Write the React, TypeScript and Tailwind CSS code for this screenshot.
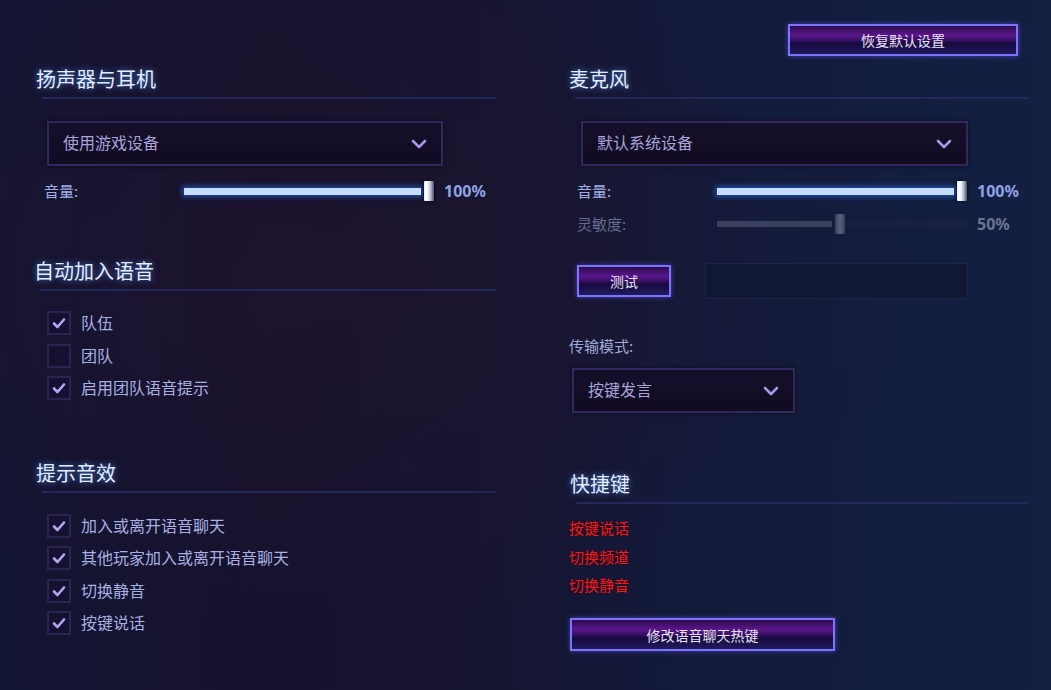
import React from "react";

// Shared text styles
const FONT = "font-['Noto_Sans_CJK_SC','Noto_Sans',sans-serif]";

const Chevron: React.FC = () => (
  <svg width="16" height="10" viewBox="0 0 16 10" fill="none">
    <path d="M2 2l6 6 6-6" stroke="#a796e6" strokeWidth="2.6" strokeLinecap="round" strokeLinejoin="round" />
  </svg>
);

const SectionTitle: React.FC<{ title: string; className?: string }> = ({ title, className }) => (
  <div className={className}>
    <h2 className="text-[20px] leading-[28px] text-[#e2edff] [text-shadow:0_0_6px_rgba(90,150,255,0.8)]">
      {title}
    </h2>
    <div className="mt-[4px] ml-[6px] h-[2px] bg-[#23275a]" />
  </div>
);

const Dropdown: React.FC<{ label: string; className?: string }> = ({ label, className }) => (
  <div
    className={`flex h-[45px] items-center justify-between border-2 border-[#33285e] bg-[linear-gradient(180deg,#150f2a_0%,#110c22_100%)] px-[14px] shadow-[0_0_4px_rgba(0,0,0,0.6)] ${className ?? ""}`}
  >
    <span className="-translate-y-[2px] text-[16px] leading-[22px] text-[#a9a3d9]">{label}</span>
    <Chevron />
  </div>
);

const Slider: React.FC<{ value: number; dim?: boolean }> = ({ value, dim }) => {
  // track is 250px wide: fill, 3px gap, 10px handle, rest empty
  const fill = Math.round((250 - 13) * (value / 100) * (dim ? 0.97 : 1));
  return (
    <div className="flex h-[20px] w-[250px] items-center">
      <div
        className={
          dim
            ? "h-[6px] bg-[#3a415e]"
            : "h-[7px] bg-[#c6dcff] shadow-[0_0_5px_2px_rgba(40,120,255,0.55)]"
        }
        style={{ width: fill }}
      />
      <div className="w-[3px]" />
      <div
        className={
          dim
            ? "h-[20px] w-[10px] rounded-[1px] bg-[linear-gradient(90deg,#3a4058_0%,#5a6280_50%,#3a4058_100%)]"
            : "h-[20px] w-[10px] rounded-[1px] bg-[linear-gradient(90deg,#e8eeff_0%,#ffffff_30%,#b8bed4_65%,#4a4f66_100%)] shadow-[0_0_3px_rgba(0,0,0,0.9)]"
        }
      />
      <div className={dim ? "h-[6px] flex-1 bg-[#1a2040]" : "flex-1"} />
    </div>
  );
};

const SliderRow: React.FC<{ label: string; value: number; dim?: boolean; className?: string }> = ({
  label,
  value,
  dim,
  className,
}) => (
  <div className={`ml-[8px] flex h-[20px] items-center ${className ?? ""}`}>
    <span className={`w-[140px] text-[15px] leading-[20px] ${dim ? "text-[#656c8c]" : "text-[#a0b0e2]"}`}>
      {label}
    </span>
    <Slider value={value} dim={dim} />
    <span
      className={`ml-[10px] font-['Noto_Sans',sans-serif] text-[16px] font-bold leading-[20px] ${
        dim ? "text-[#6c7494]" : "text-[#8fa2e6]"
      }`}
    >
      {value}%
    </span>
  </div>
);

const Checkbox: React.FC<{ label: string; checked: boolean }> = ({ label, checked }) => (
  <div className="ml-[11px] flex h-[24px] items-center gap-[10px]">
    <div className="flex h-[24px] w-[24px] items-center justify-center border-2 border-[#2b2450] bg-[#151130]">
      {checked && (
        <svg width="14" height="12" viewBox="0 0 14 12" fill="none">
          <path d="M2 6.5l3.5 3.5L12 2.5" stroke="#b9a4f4" strokeWidth="2.6" strokeLinecap="round" strokeLinejoin="round" />
        </svg>
      )}
    </div>
    <span className="-translate-y-[1px] text-[16px] leading-[22px] text-[#a8b0e2]">{label}</span>
  </div>
);

const PurpleButton: React.FC<{ label: string; className?: string }> = ({ label, className }) => (
  <button
    className={`flex items-center justify-center border-2 border-[#7c74ff] bg-[linear-gradient(180deg,#2c0b4c_0%,#5a168a_32%,#3a0f66_50%,#170a40_62%,#221a5c_100%)] text-[14px] leading-[20px] text-[#e6e2f4] shadow-[0_0_5px_rgba(100,90,255,0.6)] ${className ?? ""}`}
  >
    {label}
  </button>
);

const App: React.FC = () => {
  return (
    <div
      className={`${FONT} relative h-[690px] w-[1051px] overflow-hidden bg-[linear-gradient(90deg,#121533_0%,#16122e_25%,#151430_45%,#131a3a_65%,#132042_100%)]`}
    >
      <div className="flex h-full bg-[radial-gradient(ellipse_at_30%_40%,rgba(40,20,40,0.35)_0%,rgba(0,0,0,0)_60%)]">
        {/* Left column */}
        <div className="ml-[36px] flex w-[460px] flex-col">
          <SectionTitle title="扬声器与耳机" className="mt-[65px]" />
          <Dropdown label="使用游戏设备" className="mt-[22px] ml-[11px] w-[396px]" />
          <SliderRow label="音量:" value={100} className="mt-[15px]" />

          <SectionTitle title="自动加入语音" className="mt-[56px] -ml-[2px]" />
          <div className="mt-[20px] flex flex-col gap-[8.5px]">
            <Checkbox label="队伍" checked />
            <Checkbox label="团队" checked={false} />
            <Checkbox label="启用团队语音提示" checked />
          </div>

          <SectionTitle title="提示音效" className="mt-[59px]" />
          <div className="mt-[21px] flex flex-col gap-[8.3px]">
            <Checkbox label="加入或离开语音聊天" checked />
            <Checkbox label="其他玩家加入或离开语音聊天" checked />
            <Checkbox label="切换静音" checked />
            <Checkbox label="按键说话" checked />
          </div>
        </div>

        {/* Right column */}
        <div className="ml-[73px] flex w-[459px] flex-col">
          <PurpleButton label="恢复默认设置" className="mt-[24px] mr-[10px] h-[32px] w-[230px] self-end" />
          <SectionTitle title="麦克风" className="mt-[9px]" />
          <Dropdown label="默认系统设备" className="mt-[22px] ml-[12px] w-[387px]" />
          <SliderRow label="音量:" value={100} className="mt-[15px]" />
          <SliderRow label="灵敏度:" value={50} dim className="mt-[13px]" />

          <div className="mt-[29px] ml-[8px] flex items-center gap-[34px]">
            <PurpleButton label="测试" className="h-[32px] w-[94px]" />
            <div className="h-[36px] w-[263px] border border-[#1d2546] bg-[#111833]" />
          </div>

          <span className="mt-[36px] text-[15px] leading-[22px] text-[#a0abda]">传输模式:</span>
          <Dropdown label="按键发言" className="mt-[11px] ml-[3px] w-[223px]" />

          <SectionTitle title="快捷键" className="mt-[57px] ml-[1px]" />
          <div className="mt-[13px] flex flex-col gap-[6.5px]">
            {["按键说话", "切换频道", "切换静音"].map((t) => (
              <span
                key={t}
                className="text-[15px] leading-[22px] text-[#ee1a1e] [text-shadow:0_0_2px_rgba(80,0,0,0.9)]"
              >
                {t}
              </span>
            ))}
          </div>
          <PurpleButton label="修改语音聊天热键" className="mt-[22px] ml-[1px] h-[33px] w-[265px]" />
        </div>
      </div>
    </div>
  );
};

export default App;
